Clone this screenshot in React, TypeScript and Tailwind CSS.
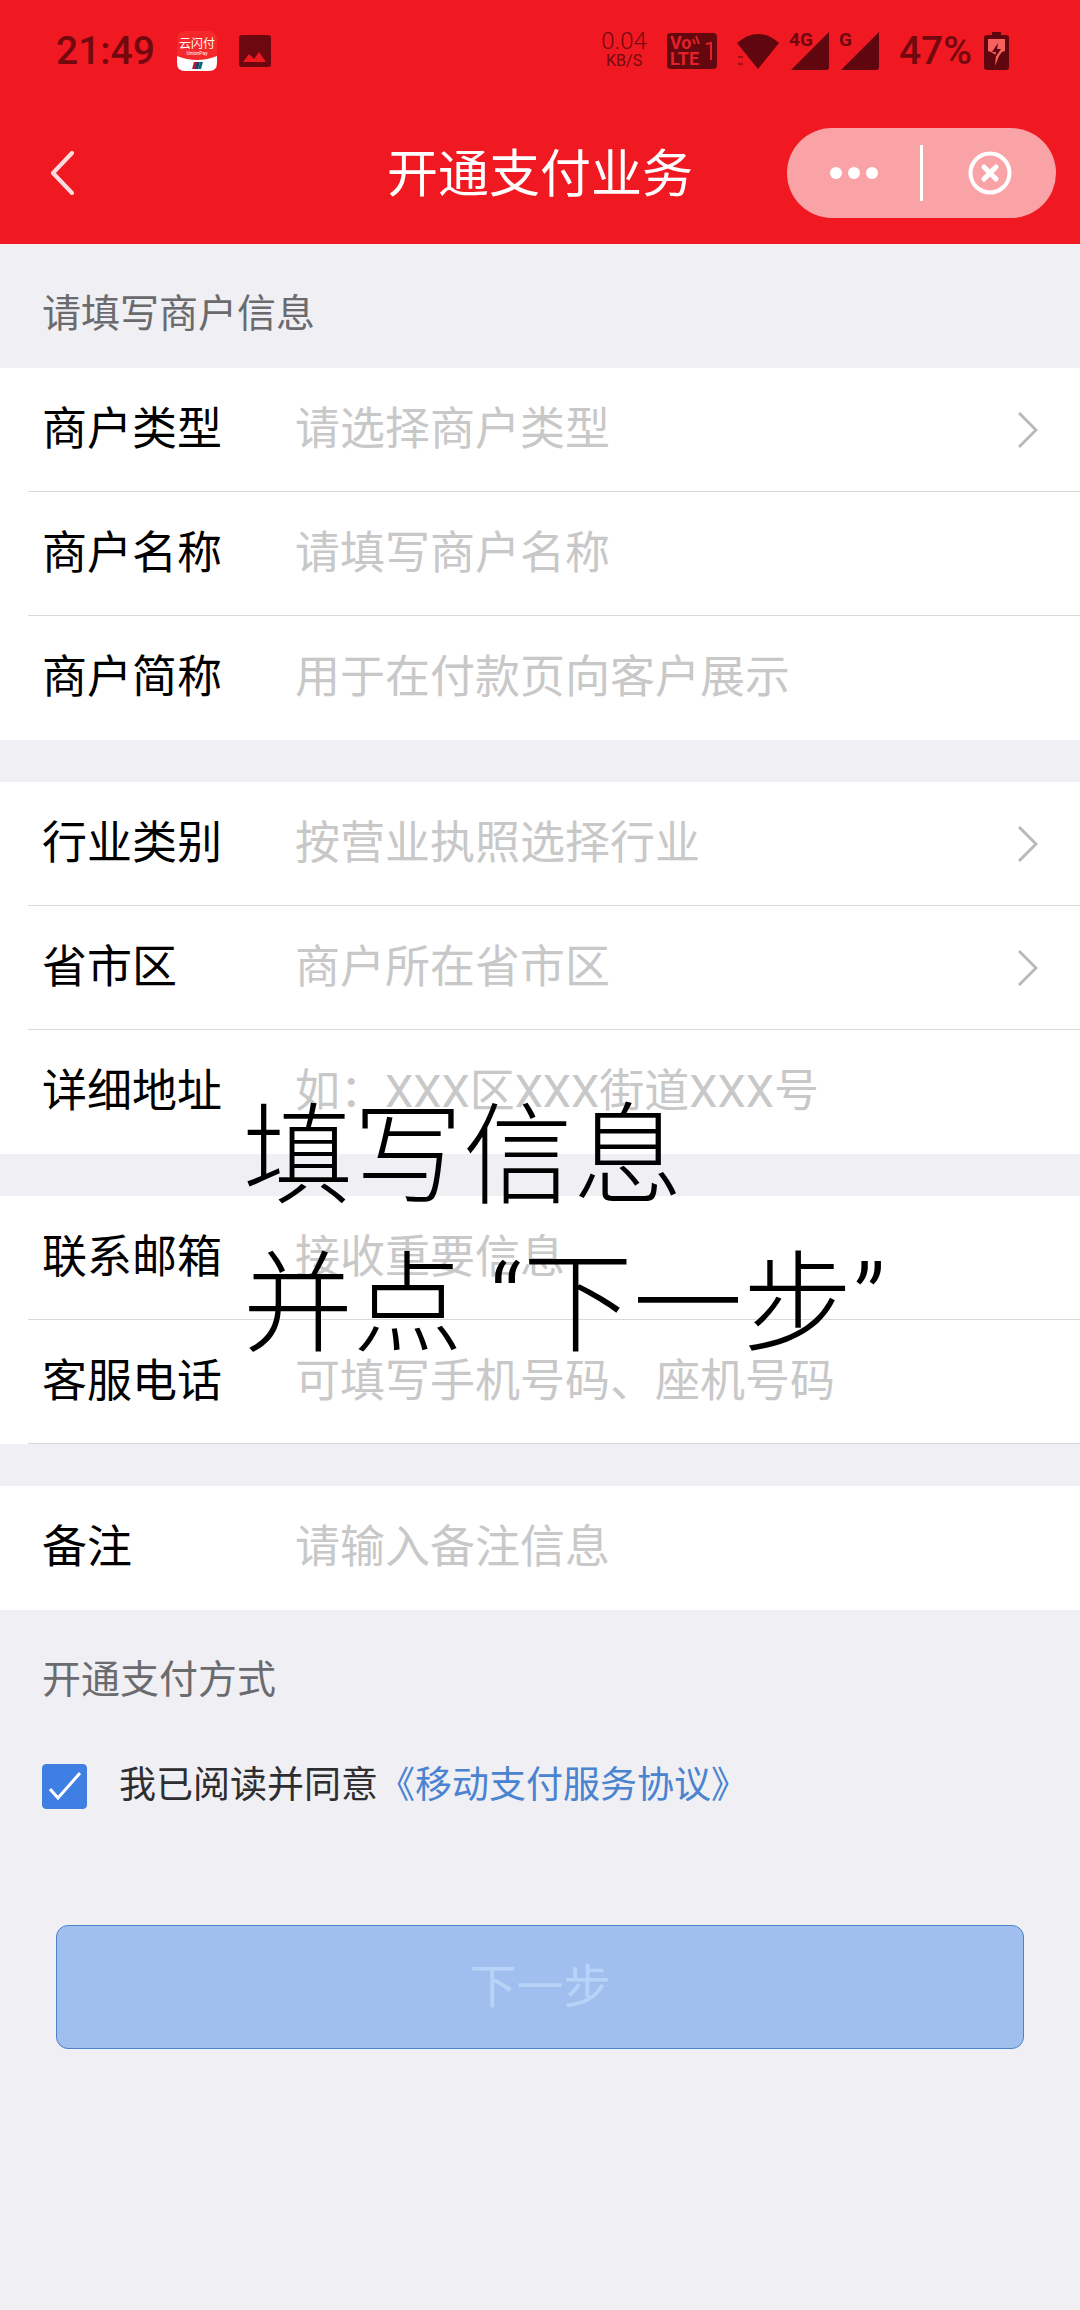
import clsx from "clsx";
import React from "react";

interface FieldProps {
  id: string;
  label: string;
  placeholder: string;
  type?: "text" | "email" | "tel";
  select?: boolean;
  divider?: boolean;
}

const merchantFields: FieldProps[] = [
  { id: "type", label: "商户类型", placeholder: "请选择商户类型", select: true, divider: true },
  { id: "name", label: "商户名称", placeholder: "请填写商户名称", divider: true },
  { id: "short-name", label: "商户简称", placeholder: "用于在付款页向客户展示" },
];

const addressFields: FieldProps[] = [
  { id: "industry", label: "行业类别", placeholder: "按营业执照选择行业", select: true, divider: true },
  { id: "region", label: "省市区", placeholder: "商户所在省市区", select: true, divider: true },
  { id: "address", label: "详细地址", placeholder: "如：XXX区XXX街道XXX号" },
];

const contactFields: FieldProps[] = [
  { id: "email", label: "联系邮箱", placeholder: "接收重要信息", type: "email", divider: true },
  { id: "phone", label: "客服电话", placeholder: "可填写手机号码、座机号码", type: "tel", divider: true },
];

const remarkFields: FieldProps[] = [
  { id: "remark", label: "备注", placeholder: "请输入备注信息" },
];

const AppIcon = () => (
  <svg className="size-10" viewBox="0 0 40 40" aria-hidden="true">
    <rect width="40" height="40" rx="8" fill="#f5282a" />
    <path d="M0 25Q20 33 40 25V32Q40 40 32 40H8Q0 40 0 32Z" fill="#fff" />
    <text x="20" y="17" textAnchor="middle" fontSize="12" fill="#fff">
      云闪付
    </text>
    <text x="20" y="24" textAnchor="middle" fontSize="5" fill="#fff">
      UnionPay
    </text>
    <path d="M17 31h4l-2 7h-4z" fill="#b3202c" />
    <path d="M20 31h3l-2 7h-3z" fill="#1c3f73" />
    <path d="M23 31h3l-2 7h-3z" fill="#0b6b74" />
  </svg>
);

const PictureIcon = () => (
  <svg className="size-8" viewBox="0 0 32 32" aria-hidden="true">
    <path
      fillRule="evenodd"
      fill="#6d0710"
      d="M3 0h26q3 0 3 3v26q0 3-3 3H3q-3 0-3-3V3q0-3 3-3zM4 27h23l-7-10-5 7-5-5z"
    />
  </svg>
);

const VolteIcon = () => (
  <svg className="h-9 w-[50px] overflow-visible" viewBox="0 0 50 36" aria-hidden="true">
    <rect width="50" height="36" rx="4" fill="#64070f" />
    <g fill="#e2212a" fontWeight="700" fontSize="18">
      <text x="3" y="16">Vo</text>
      <text x="3" y="32">LTE</text>
    </g>
    <path d="M26 6l2 5M29 3l3 8M39 11l5-1v17" fill="none" stroke="#e2212a" strokeWidth="2" />
  </svg>
);

const WifiIcon = () => (
  <svg className="h-9 w-[42px]" viewBox="0 0 42 36" aria-hidden="true">
    <path d="M0 10Q21-8 42 10L21 36Z" fill="#5f060e" />
    <path d="M1 24h5M1 31h5" stroke="#a80f18" strokeWidth="2" />
  </svg>
);

const SignalIcon = ({ network }: { network: string }) => (
  <svg className="h-[38px] w-10 overflow-visible" viewBox="0 0 40 38" aria-hidden="true">
    <path d="M40 0v35q0 3-3 3H2Z" fill="#5f060e" />
    <text x="0" y="14" fontSize="19" fontWeight="700" fill="#6d0710">
      {network}
    </text>
  </svg>
);

const BatteryIcon = () => (
  <svg className="h-[38px] w-[25px]" viewBox="0 0 25 38" aria-hidden="true">
    <path d="M8 0h9v3h5q3 0 3 3v29q0 3-3 3H3q-3 0-3-3V6q0-3 3-3h5z" fill="#5f060e" />
    <path d="M4 7h17v12l-3 1-3 4-4 10 1-11-5-3-3-1z" fill="#f7625f" />
    <path d="M14 11l-6 9h4l-1 6 6-9h-4z" fill="#5f060e" />
  </svg>
);

const StatusBar = () => (
  <div className="flex h-[102px] items-center justify-between pr-[71px] pl-14 text-[#74080f]">
    <div className="flex items-center gap-[22px]">
      <span className="text-[39px] leading-10 font-medium">21:49</span>
      <AppIcon />
      <PictureIcon />
    </div>
    <div className="flex items-center gap-5">
      <div className="flex flex-col items-center">
        <span className="text-[24px] leading-5 font-light">0.04</span>
        <span className="text-[16px] leading-5">KB/S</span>
      </div>
      <VolteIcon />
      <div className="flex items-center gap-[10px]">
        <WifiIcon />
        <SignalIcon network="4G" />
        <SignalIcon network="G" />
      </div>
      <div className="flex items-center gap-3">
        <span className="text-[39px] leading-10 font-medium">47%</span>
        <BatteryIcon />
      </div>
    </div>
  </div>
);

const TitleBar = () => (
  <div className="grid h-[142px] grid-cols-[1fr_auto_1fr] items-center px-6">
    <button type="button" aria-label="返回" className="justify-self-start pl-[26px]">
      <svg className="h-[44px] w-6" viewBox="0 0 24 44" fill="none" stroke="#fff" strokeWidth="4">
        <path d="M22 2 3 22l19 20" strokeLinecap="round" strokeLinejoin="round" opacity=".85" />
      </svg>
    </button>
    <h1 className="pt-1 text-[51px] leading-[60px] text-white">开通支付业务</h1>
    <div className="flex h-[90px] w-[269px] items-center justify-self-end rounded-full bg-[#f9a3a7]">
      <button type="button" aria-label="更多" className="flex flex-1 justify-center">
        <svg className="h-3 w-12" viewBox="0 0 48 12" fill="#fff">
          <circle cx="6" cy="6" r="6" />
          <circle cx="24" cy="6" r="6" />
          <circle cx="42" cy="6" r="6" />
        </svg>
      </button>
      <span className="h-14 w-[3px] bg-white" />
      <button type="button" aria-label="关闭" className="flex flex-1 justify-center">
        <svg className="size-11" viewBox="0 0 44 44" fill="none" stroke="#fff" strokeWidth="4">
          <circle cx="22" cy="22" r="19.5" />
          <path d="M16 16l12 12M28 16 16 28" strokeWidth="5" strokeLinecap="round" />
        </svg>
      </button>
    </div>
  </div>
);

const Field: React.FC<FieldProps> = ({ id, label, placeholder, type = "text", select, divider }) => (
  <div
    className={clsx(
      "ml-7 flex h-[124px] items-center pr-[42px] pl-[14px] text-[45px] leading-[60px]",
      divider && "border-b border-[#d9d9d9]"
    )}
  >
    <label htmlFor={id} className="w-[253px] shrink-0 text-black">
      {label}
    </label>
    {select ? (
      <>
        <select
          id={id}
          defaultValue=""
          className="min-w-0 flex-1 appearance-none bg-transparent text-[#c8c8c8] outline-none"
        >
          <option value="">{placeholder}</option>
        </select>
        <svg className="h-9 w-5" viewBox="0 0 20 36" fill="none" stroke="#b9b9b9" strokeWidth="3">
          <path d="M1 1l17 17L1 35" />
        </svg>
      </>
    ) : (
      <input
        id={id}
        type={type}
        placeholder={placeholder}
        className="min-w-0 flex-1 bg-transparent outline-none placeholder:text-[#c8c8c8]"
      />
    )}
  </div>
);

const FieldGroup = ({ fields }: { fields: FieldProps[] }) => (
  <div className="bg-white">
    {fields.map((field) => (
      <Field key={field.id} {...field} />
    ))}
  </div>
);

const SectionTitle = ({ children }: { children: React.ReactNode }) => (
  <h2 className="px-[42px] pt-[42px] pb-[26px] text-[39px] leading-[56px] text-[#6b6b6e]">
    {children}
  </h2>
);

const App = () => {
  const [agreed, setAgreed] = React.useState(true);

  return (
    <div className="min-h-screen bg-[#efeff4] font-[Roboto,'Noto_Sans_CJK_SC',sans-serif]">
      <header className="bg-[#f01922]">
        <StatusBar />
        <TitleBar />
      </header>

      <form className="relative pb-16" onSubmit={(e) => e.preventDefault()}>
        <SectionTitle>请填写商户信息</SectionTitle>
        <div className="flex flex-col gap-[42px]">
          <FieldGroup fields={merchantFields} />
          <FieldGroup fields={addressFields} />
          <FieldGroup fields={contactFields} />
          <FieldGroup fields={remarkFields} />
        </div>

        <SectionTitle>开通支付方式</SectionTitle>
        <div className="mt-6 flex items-center px-[42px] text-[37px] leading-[56px]">
          <span className="grid size-[45px] place-items-center">
            <input
              id="agree"
              type="checkbox"
              checked={agreed}
              onChange={(e) => setAgreed(e.target.checked)}
              className="col-start-1 row-start-1 size-[45px] appearance-none rounded-[4px] border border-[#3f7fe0] checked:bg-[#3f7fe4]"
            />
            {agreed && (
              <svg
                className="pointer-events-none col-start-1 row-start-1 h-7 w-8"
                viewBox="0 0 32 28"
                fill="none"
                stroke="#fff"
                strokeWidth="3"
              >
                <path d="M1 17l8 9L31 1" />
              </svg>
            )}
          </span>
          <label htmlFor="agree" className="pl-8 text-[#2e2e30]">
            我已阅读并同意
          </label>
          <a href="#agreement" className="text-[#4a83cf]">
            《移动支付服务协议》
          </a>
        </div>

        <div className="mt-[111px] px-14">
          <button
            type="submit"
            disabled
            className="h-[124px] w-full rounded-xl border border-[#4b82c9] bg-[#a0bfee] text-[47px] leading-[60px] text-[#b8d3f8]"
          >
            下一步
          </button>
        </div>

        {/* guide note floating over the form */}
        <p className="pointer-events-none absolute top-[840px] left-[243px] text-[110px] leading-[148px] font-light whitespace-nowrap text-black">
          填写信息
          <br />
          并点 “下一步”
        </p>
      </form>
    </div>
  );
};

export default App;
